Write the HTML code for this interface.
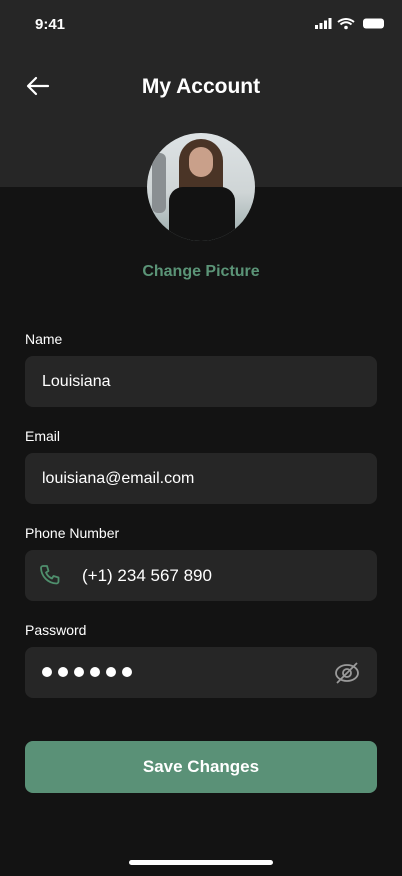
<!DOCTYPE html>
<html><head><meta charset="utf-8"><style>
*{margin:0;padding:0;box-sizing:border-box}
body{width:402px;height:876px;background:#131313;font-family:"Liberation Sans",sans-serif;color:#fff;position:relative;overflow:hidden}
.hdr{position:absolute;left:0;top:0;width:402px;height:187px;background:#262626}
.t{position:absolute}
.lbl{position:absolute;left:25px;font-size:14px;color:#fff}
.fld{position:absolute;left:25px;width:352px;height:51px;background:#262626;border-radius:8px;font-size:16px;line-height:51px;padding-left:17px}
.dot{position:absolute;top:667px;width:10px;height:10px;border-radius:50%;background:#fff}
</style></head><body>
<div class="hdr"></div>
<div class="t" style="left:35px;top:16px;font-size:15px;font-weight:bold">9:41</div>
<svg class="t" style="left:314px;top:17px" width="72" height="14" viewBox="0 0 72 14">
<rect x="1" y="8" width="3" height="4" fill="#fff"/><rect x="5.5" y="6" width="3" height="6" fill="#fff"/><rect x="10" y="3.5" width="3" height="8.5" fill="#fff"/><rect x="14.5" y="1" width="3" height="11" fill="#fff"/>
<path d="M24 5 Q32 -1 40 5 M26.5 7.5 Q32 3 37.5 7.5" stroke="#fff" stroke-width="2" fill="none"/><circle cx="32" cy="10.5" r="1.8" fill="#fff"/>
<rect x="49" y="1.5" width="21" height="10" rx="3" fill="#fff"/>
</svg>
<svg class="t" style="left:26px;top:76px" width="24" height="20" viewBox="0 0 24 20"><path d="M22 10H3M10 2L2 10L10 18" stroke="#fff" stroke-width="2.2" fill="none" stroke-linecap="round" stroke-linejoin="round"/></svg>
<div class="t" style="left:0;width:402px;top:75px;text-align:center;font-size:21px;font-weight:bold">My Account</div>
<div class="t" style="left:147px;top:133px;width:108px;height:108px;border-radius:50%;overflow:hidden;background:linear-gradient(#dde2e4 0%,#cfd5d6 55%,#9aa 100%)">
<div style="position:absolute;left:32px;top:6px;width:44px;height:80px;background:#4a3426;border-radius:22px 22px 8px 8px"></div>
<div style="position:absolute;left:42px;top:14px;width:24px;height:30px;background:#c9a08a;border-radius:12px"></div>
<div style="position:absolute;left:22px;top:54px;width:66px;height:60px;background:#121212;border-radius:14px 14px 0 0"></div>
<div style="position:absolute;left:5px;top:20px;width:14px;height:60px;background:#8a8f92;border-radius:6px"></div>
</div>
<div class="t" style="left:0;width:402px;top:263px;text-align:center;font-size:16px;color:#5b9477;font-weight:bold">Change Picture</div>
<div class="lbl" style="top:331px">Name</div>
<div class="fld" style="top:356px">Louisiana</div>
<div class="lbl" style="top:428px">Email</div>
<div class="fld" style="top:453px">louisiana@email.com</div>
<div class="lbl" style="top:525px">Phone Number</div>
<div class="fld" style="top:550px;padding-left:57px;font-size:17px">(+1) 234 567 890</div>
<svg class="t" style="left:38px;top:563px" width="24" height="24" viewBox="0 0 24 24"><path d="M5 3h4l1.5 5-2.5 1.5a11 11 0 0 0 6 6L15.5 13l5 1.5v4a2 2 0 0 1-2 2A16 16 0 0 1 3 5a2 2 0 0 1 2-2z" stroke="#4f8f6d" stroke-width="1.8" fill="none" stroke-linejoin="round"/></svg>
<div class="lbl" style="top:622px">Password</div>
<div class="fld" style="top:647px"></div>
<div class="dot" style="left:42px"></div><div class="dot" style="left:58px"></div><div class="dot" style="left:74px"></div><div class="dot" style="left:90px"></div><div class="dot" style="left:106px"></div><div class="dot" style="left:122px"></div>
<svg class="t" style="left:333px;top:659px" width="28" height="28" viewBox="0 0 28 28"><ellipse cx="14" cy="14" rx="11" ry="8" stroke="#9a9a9a" stroke-width="1.8" fill="none"/><circle cx="14" cy="14" r="4" stroke="#9a9a9a" stroke-width="1.8" fill="none"/><path d="M4 24L24 4" stroke="#9a9a9a" stroke-width="1.8"/></svg>
<div class="t" style="left:25px;top:741px;width:352px;height:52px;background:#5a9177;border-radius:8px;text-align:center;line-height:52px;font-size:17px;font-weight:bold">Save Changes</div>
<div class="t" style="left:129px;top:860px;width:144px;height:5px;border-radius:3px;background:#fff"></div>
</body></html>
